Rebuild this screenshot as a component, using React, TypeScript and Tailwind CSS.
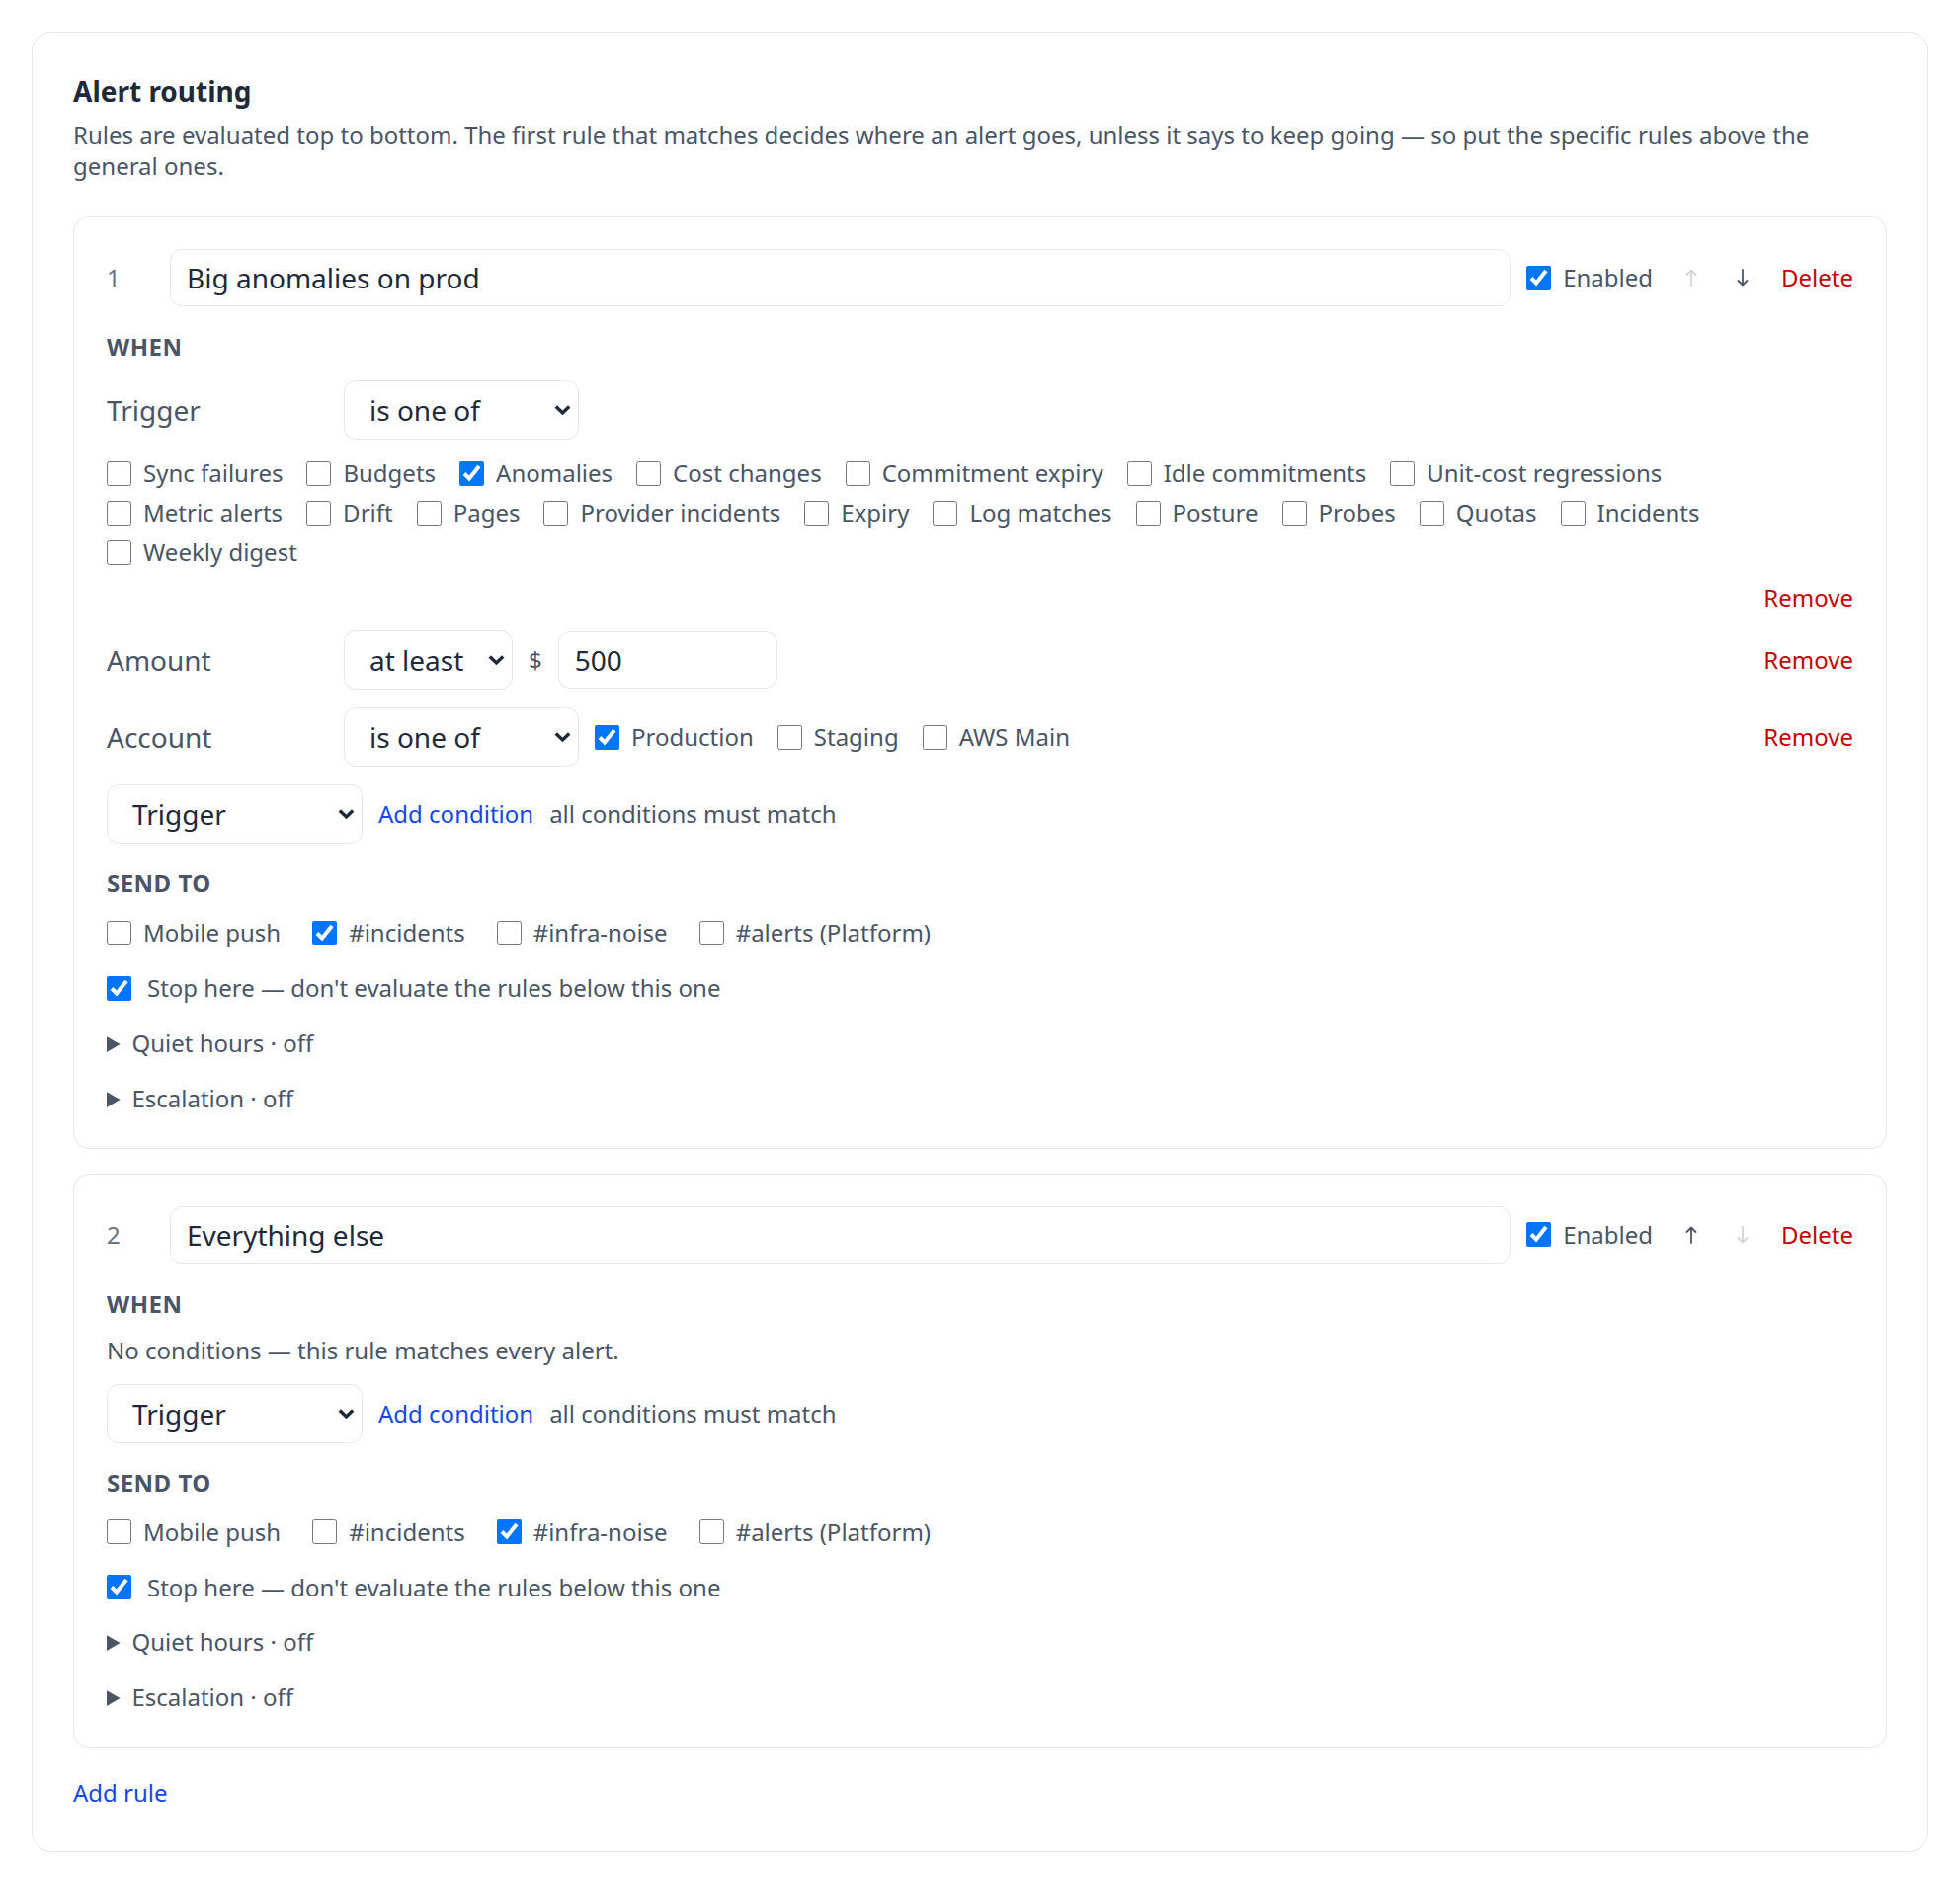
import { useState } from "react";

interface CheckProps {
  label: string;
  checked?: boolean;
  wide?: boolean;
}

const Check: React.FC<CheckProps> = ({ label, checked, wide }) => (
  <label
    className={
      wide
        ? "inline-flex h-8 items-center gap-4 text-[24px] leading-8 text-gray-600"
        : "inline-flex h-8 items-center gap-3 text-[24px] leading-8 text-gray-600"
    }
  >
    <input type="checkbox" defaultChecked={checked} className="h-[25px] w-[25px] shrink-0" />
    <span>{label}</span>
  </label>
);

interface SelectProps {
  value: string;
  options: string[];
  className: string;
}

// select with its own chevron drawn on top
const Select: React.FC<SelectProps> = ({ value, options, className }) => (
  <div className={"relative shrink-0 " + className}>
    <select
      defaultValue={value}
      className="h-[60px] w-full appearance-none rounded-xl border border-gray-200 bg-white pl-[25px] pr-10 text-[28px] leading-normal text-gray-800"
    >
      {options.map((o) => (
        <option key={o}>{o}</option>
      ))}
    </select>
    <svg
      width="17"
      height="11"
      viewBox="0 0 17 11"
      fill="none"
      stroke="currentColor"
      strokeWidth="3.4"
      className="pointer-events-none absolute right-[8px] top-1/2 -translate-y-1/2 text-gray-800"
    >
      <path d="M1.8 2L8.5 8.5L15.2 2" />
    </svg>
  </div>
);

const Arrow: React.FC<{ up?: boolean; off?: boolean }> = ({ up, off }) => (
  <svg
    width="12"
    height="18"
    viewBox="0 0 12 18"
    fill="none"
    stroke="currentColor"
    strokeWidth="1.8"
    strokeLinecap="round"
    strokeLinejoin="round"
    className={off ? "text-gray-300" : "text-gray-600"}
  >
    {up ? <path d="M6 1.5V17M1.5 6L6 1.5L10.5 6" /> : <path d="M6 1V16.5M1.5 12L6 16.5L10.5 12" />}
  </svg>
);

const Remove = () => (
  <button className="ml-auto text-[24px] leading-8 text-red-700">Remove</button>
);

const AddCondition = () => (
  <div className="mt-[18px] flex h-[60px] items-center gap-4">
    <Select
      value="Trigger"
      options={["Trigger", "Amount", "Account", "Service", "Severity"]}
      className="w-[259px]"
    />
    <button className="text-[24px] leading-8 text-blue-700">Add condition</button>
    <span className="text-[24px] leading-8 text-gray-600">all conditions must match</span>
  </div>
);

const TRIGGERS = [
  "Sync failures",
  "Budgets",
  "Anomalies",
  "Cost changes",
  "Commitment expiry",
  "Idle commitments",
  "Unit-cost regressions",
  "Metric alerts",
  "Drift",
  "Pages",
  "Provider incidents",
  "Expiry",
  "Log matches",
  "Posture",
  "Probes",
  "Quotas",
  "Incidents",
  "Weekly digest",
];

const DESTINATIONS = ["Mobile push", "#incidents", "#infra-noise", "#alerts (Platform)"];

interface RuleProps {
  index: number;
  name: string;
  first?: boolean;
  last?: boolean;
  sendTo: string;
  children: React.ReactNode;
}

const Rule: React.FC<RuleProps> = ({ index, name, first, last, sendTo, children }) => {
  const [title, setTitle] = useState(name);

  return (
    <div className="rounded-2xl border border-gray-200 px-[33px] pt-8 pb-[34px]">
      <div className="flex h-[58px] items-center gap-4">
        <span className="w-12 shrink-0 text-[24px] leading-8 text-gray-500">{index}</span>
        <input
          value={title}
          onChange={(e) => setTitle(e.target.value)}
          className="h-[58px] min-w-0 flex-1 rounded-xl border border-gray-200 px-4 text-[28px] text-gray-800"
        />
        <Check label="Enabled" checked />
        <div className="flex gap-[6px]">
          <button className="flex h-8 w-[46px] items-center justify-center">
            <Arrow up off={first} />
          </button>
          <button className="flex h-8 w-[46px] items-center justify-center">
            <Arrow off={last} />
          </button>
        </div>
        <button className="text-[24px] leading-8 text-red-700">Delete</button>
      </div>

      <div className="mt-[25px] text-[24px] font-bold leading-8 tracking-[0.02em] text-gray-600">WHEN</div>
      {children}

      <div className="mt-6 text-[24px] font-bold leading-8 tracking-[0.02em] text-gray-600">SEND TO</div>
      <div className="mt-[18px] flex flex-wrap gap-x-8">
        {DESTINATIONS.map((d) => (
          <Check key={d} label={d} checked={d === sendTo} />
        ))}
      </div>
      <div className="mt-6">
        <Check label="Stop here — don't evaluate the rules below this one" checked wide />
      </div>
      <details className="mt-[21px]">
        <summary className="h-8 cursor-pointer text-[24px] leading-8 text-gray-600">Quiet hours · off</summary>
      </details>
      <details className="mt-6">
        <summary className="h-8 cursor-pointer text-[24px] leading-8 text-gray-600">Escalation · off</summary>
      </details>
    </div>
  );
};

export default function App() {
  return (
    <div className="min-h-[1906px] bg-white p-8 font-['Noto_Sans',sans-serif]">
      <div className="rounded-[20px] border border-gray-200 px-[41px] pt-10 pb-[43px]">
        <h2 className="text-[28px] font-bold leading-[38px] text-gray-800">Alert routing</h2>
        <p className="mt-[10px] text-[24px] leading-[31px] text-gray-600">
          Rules are evaluated top to bottom. The first rule that matches decides where an alert goes, unless it
          says to keep going — so put the specific rules above the general ones.
        </p>

        <div className="mt-9 flex flex-col gap-[25px]">
          <Rule index={1} name="Big anomalies on prod" first sendTo="#incidents">
            <div className="mt-[18px] flex h-[60px] items-center gap-4">
              <span className="w-[224px] shrink-0 text-[28px] text-gray-600">Trigger</span>
              <Select value="is one of" options={["is one of", "is not one of"]} className="w-[238px]" />
            </div>
            <div className="mt-[18px] flex flex-wrap gap-x-6 gap-y-2">
              {TRIGGERS.map((t) => (
                <Check key={t} label={t} checked={t === "Anomalies"} />
              ))}
            </div>
            <div className="mt-[14px] flex h-8">
              <Remove />
            </div>

            <div className="mt-[17px] flex h-[60px] items-center gap-4">
              <span className="w-[224px] shrink-0 text-[28px] text-gray-600">Amount</span>
              <Select value="at least" options={["at least", "at most"]} className="w-[171px]" />
              <span className="text-[24px] text-gray-600">$</span>
              <input
                defaultValue="500"
                className="h-[58px] w-[222px] rounded-xl border border-gray-200 px-4 text-[28px] text-gray-800"
              />
              <Remove />
            </div>

            <div className="mt-[18px] flex h-[60px] items-center gap-4">
              <span className="w-[224px] shrink-0 text-[28px] text-gray-600">Account</span>
              <Select value="is one of" options={["is one of", "is not one of"]} className="w-[238px]" />
              <div className="flex flex-wrap gap-x-6">
                <Check label="Production" checked />
                <Check label="Staging" />
                <Check label="AWS Main" />
              </div>
              <Remove />
            </div>

            <AddCondition />
          </Rule>

          <Rule index={2} name="Everything else" last sendTo="#infra-noise">
            <p className="mt-[15px] text-[24px] leading-8 text-gray-600">
              No conditions — this rule matches every alert.
            </p>
            <AddCondition />
          </Rule>
        </div>

        <button className="mt-[30px] block text-[24px] leading-8 text-blue-700">Add rule</button>
      </div>
    </div>
  );
}
